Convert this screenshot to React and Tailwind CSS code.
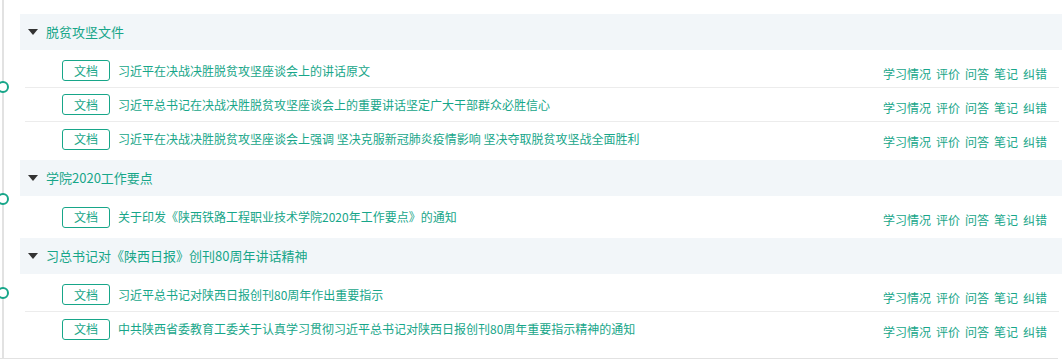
const groups = [
  {
    title: '脱贫攻坚文件',
    items: [
      '习近平在决战决胜脱贫攻坚座谈会上的讲话原文',
      '习近平总书记在决战决胜脱贫攻坚座谈会上的重要讲话坚定广大干部群众必胜信心',
      '习近平在决战决胜脱贫攻坚座谈会上强调 坚决克服新冠肺炎疫情影响 坚决夺取脱贫攻坚战全面胜利',
    ],
  },
  {
    title: '学院2020工作要点',
    items: ['关于印发《陕西铁路工程职业技术学院2020年工作要点》的通知'],
  },
  {
    title: '习总书记对《陕西日报》创刊80周年讲话精神',
    items: [
      '习近平总书记对陕西日报创刊80周年作出重要指示',
      '中共陕西省委教育工委关于认真学习贯彻习近平总书记对陕西日报创刊80周年重要指示精神的通知',
    ],
  },
];

const actions = ['学习情况', '评价', '问答', '笔记', '纠错'];

function Row({ text, last }) {
  return (
    <div
      className={`ml-[5px] mr-[3px] h-[34px] flex items-center pl-[37px] pr-[12px] ${
        last ? '' : 'border-b border-[#ececec]'
      }`}
    >
      <span className="w-[48px] h-[21px] flex items-center justify-center border border-[#17a689] rounded-[3px] text-[12px] text-[#17a689] shrink-0">
        文档
      </span>
      <span className="ml-[8px] text-[12px] text-[#17a689] whitespace-nowrap cursor-pointer">{text}</span>
      <div className="ml-auto mt-[6px] flex gap-[5px] text-[12px] text-[#17a689]">
        {actions.map(a => (
          <span key={a} className="cursor-pointer">{a}</span>
        ))}
      </div>
    </div>
  );
}

function Group({ group }) {
  return (
    <div>
      <div className="h-[36px] bg-[#f2f6f9] flex items-center pl-[8px]">
        <span className="w-0 h-0 border-l-[5px] border-r-[5px] border-t-[6px] border-l-transparent border-r-transparent border-t-[#333]" />
        <span className="ml-[8px] text-[13px] text-[#17a689]">{group.title}</span>
      </div>
      <div className="py-[4px]">
        {group.items.map((t, i) => (
          <Row key={t} text={t} last={i === group.items.length - 1} />
        ))}
      </div>
    </div>
  );
}

export default function App() {
  return (
    <div
      className="relative w-[1062px] h-[359px] bg-white overflow-hidden"
      style={{ fontFamily: '"Noto Sans CJK SC", "Noto Sans", sans-serif' }}
    >
      <div className="absolute left-[2px] top-0 h-[358px] w-[2px] bg-[#e2e2e2]" />
      {[81, 193, 287].map(t => (
        <div
          key={t}
          className="absolute left-[-3px] w-[12px] h-[12px] rounded-full border-2 border-[#17a689] bg-white"
          style={{ top: t }}
        />
      ))}
      <div className="pl-[20px] pt-[14px] pb-[8px] border-b-2 border-[#e2e2e2] mr-[4px]">
        <div className="mr-[-4px]">
          {groups.map(g => (
            <Group key={g.title} group={g} />
          ))}
        </div>
      </div>
    </div>
  );
}
